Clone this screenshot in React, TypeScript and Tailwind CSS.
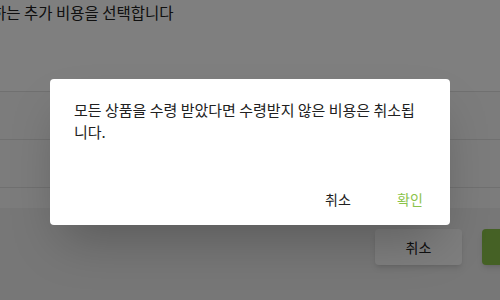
export default function App() {
  return (
    <div
      className="relative h-[300px] w-[500px] overflow-hidden bg-white"
      style={{ fontFamily: '"Noto Sans CJK KR", "Noto Sans", sans-serif' }}
    >
      {/* page behind the dialog */}
      <div className="flex h-full flex-col">
        <div className="h-[91px] pt-[1px]">
          <p className="ml-[-8px] whitespace-nowrap text-[15.5px] leading-[22px] text-[#212121]">
            하는 추가 비용을 선택합니다
          </p>
        </div>
        <div className="bg-[#f8f8f8]">
          <div className="h-[48px] border-t border-[#e0e0e0]"></div>
          <div className="h-[48px] border-t border-[#e0e0e0]"></div>
          <div className="h-[21px] border-t border-[#e0e0e0]"></div>
        </div>
        <div className="flex flex-1 items-start gap-5 bg-[#eeeeee] pl-[375px] pt-[21px]">
          <button className="h-9 w-[87px] shrink-0 rounded bg-[#fdfdfd] text-[14px] text-[#212121] shadow-md">
            취소
          </button>
          <button className="h-9 w-[87px] shrink-0 rounded bg-[#8bc34a] text-[14px] text-white shadow-md">
            확인
          </button>
        </div>
      </div>

      {/* overlay */}
      <div className="absolute inset-0 flex items-start justify-center bg-black/50 pt-[79px]">
        <div className="flex w-[400px] flex-col rounded bg-white shadow-2xl">
          <div className="px-6 pb-[30px] pt-5 text-[15px] leading-[22px] text-[#212121]">
            모든 상품을 수령 받았다면 수령받지 않은 비용은 취소됩니다.
          </div>
          <div className="flex h-[52px] items-center justify-end gap-2 p-2">
            <button className="h-9 min-w-16 rounded px-2 text-[14px] text-[#212121]">
              취소
            </button>
            <button className="h-9 min-w-16 rounded px-2 text-[14px] text-[#8bc34a]">
              확인
            </button>
          </div>
        </div>
      </div>
    </div>
  );
}
